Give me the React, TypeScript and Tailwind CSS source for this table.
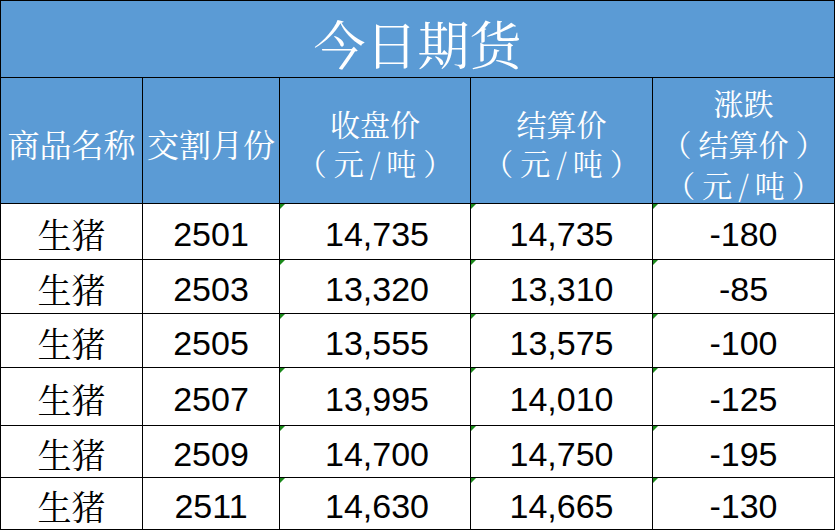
import React from "react";

const rows = [
  ["2501", "14,735", "14,735", "-180"],
  ["2503", "13,320", "13,310", "-85"],
  ["2505", "13,555", "13,575", "-100"],
  ["2507", "13,995", "14,010", "-125"],
  ["2509", "14,700", "14,750", "-195"],
  ["2511", "14,630", "14,665", "-130"],
];

const cjk = "font-['Noto_Serif_CJK_SC','Noto_Sans_CJK_SC',sans-serif]";
const num = "font-['Liberation_Sans','Noto_Sans_CJK_SC',sans-serif]";

function Tri() {
  return (
    <span className="absolute left-0 top-0 w-0 h-0 border-t-[5px] border-r-[5px] border-t-[#1a8a1a] border-r-transparent" />
  );
}

function Paren({ children }: { children: React.ReactNode }) {
  return (
    <span className="whitespace-nowrap">
      <span className="mr-[7px]">（</span>
      {children}
      <span className="ml-[7px]">）</span>
    </span>
  );
}

function Unit() {
  return (
    <Paren>
      元<span className="mx-[6px]">/</span>吨
    </Paren>
  );
}

export default function App() {
  return (
    <div className="w-[835px] h-[530px] bg-white">
      <div className="grid w-[835px] box-border border-l border-t border-black grid-cols-[142px_137px_191px_182px_182px] grid-rows-[77px_126px_56px_54px_54px_58px_52px_52px]">
        <div className={`col-span-5 box-border border-r border-b border-black bg-[#5b9bd5] flex items-center justify-center pt-[7px] text-white text-[52px] leading-none ${cjk}`}>
          今日期货
        </div>
        <div className={`box-border border-r border-b border-black bg-[#5b9bd5] flex items-center justify-center pt-[5px] text-white text-[32px] leading-[40px] ${cjk}`}>
          商品名称
        </div>
        <div className={`box-border border-r border-b border-black bg-[#5b9bd5] flex items-center justify-center pt-[5px] text-white text-[32px] leading-[40px] ${cjk}`}>
          交割月份
        </div>
        <div className={`box-border border-r border-b border-black bg-[#5b9bd5] flex flex-col items-center justify-center pt-[5px] text-white text-[30px] leading-[39px] ${cjk}`}>
          <span>收盘价</span>
          <Unit />
        </div>
        <div className={`box-border border-r border-b border-black bg-[#5b9bd5] flex flex-col items-center justify-center pt-[5px] text-white text-[30px] leading-[39px] ${cjk}`}>
          <span>结算价</span>
          <Unit />
        </div>
        <div className={`box-border border-r border-b border-black bg-[#5b9bd5] flex flex-col items-center justify-center pt-[5px] text-white text-[30px] leading-[41px] ${cjk}`}>
          <span>涨跌</span>
          <Paren>结算价</Paren>
          <Unit />
        </div>
        {rows.map((r, i) => (
          <React.Fragment key={i}>
            <div className={`box-border border-r border-b border-black flex items-center justify-center pt-[4px] text-black text-[34px] leading-none ${cjk}`}>
              生猪
            </div>
            <div className={`box-border border-r border-b border-black flex items-center justify-center pt-[4px] text-black text-[34px] leading-none ${num}`}>
              {r[0]}
            </div>
            <div className={`relative box-border border-r border-b border-black flex items-center justify-center pt-[4px] pl-[4px] text-black text-[34px] leading-none ${num}`}>
              <Tri />
              {r[1]}
            </div>
            <div className={`relative box-border border-r border-b border-black flex items-center justify-center pt-[4px] text-black text-[34px] leading-none ${num}`}>
              <Tri />
              {r[2]}
            </div>
            <div className={`relative box-border border-r border-b border-black flex items-center justify-center pt-[4px] text-black text-[34px] leading-none ${num}`}>
              <Tri />
              {r[3]}
            </div>
          </React.Fragment>
        ))}
      </div>
    </div>
  );
}
